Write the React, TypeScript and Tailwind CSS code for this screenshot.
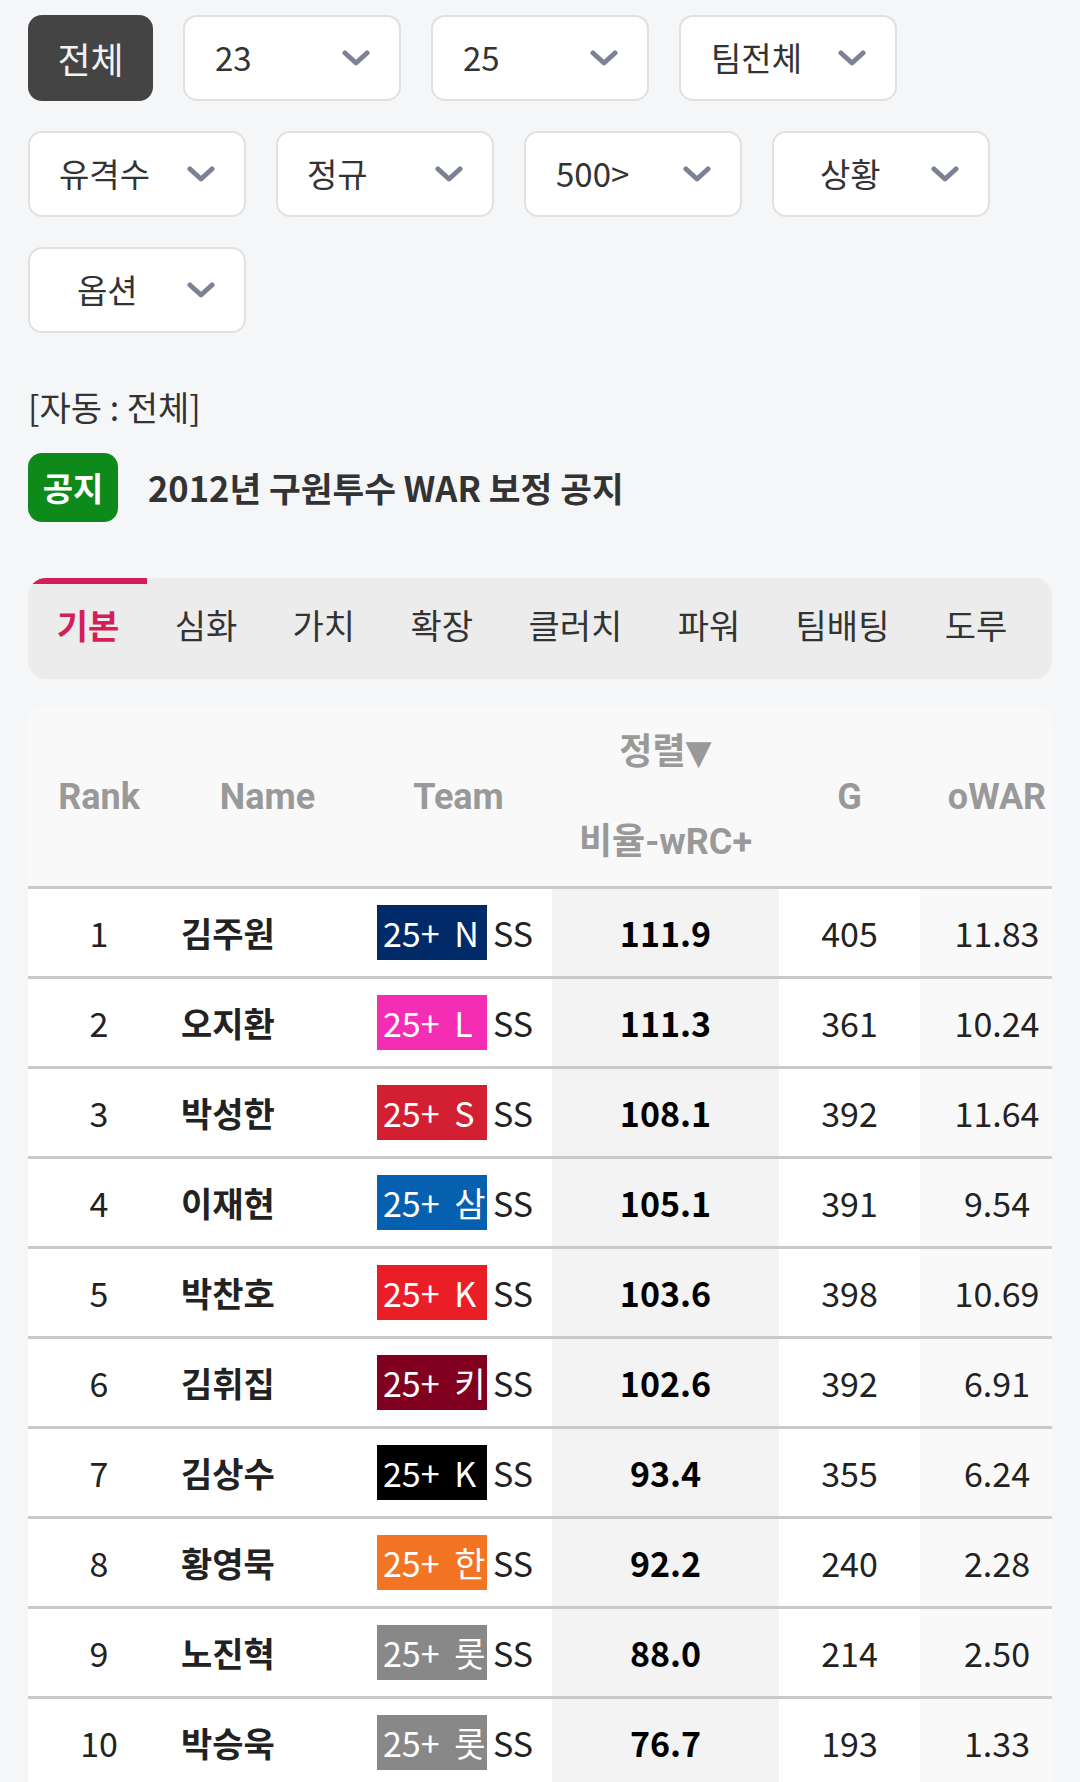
import React from 'react';

type Player = {
  rank: number;
  name: string;
  team: string;
  color: string;
  wrc: string;
  g: number;
  owar: string;
};

const players: Player[] = [
  { rank: 1, name: '김주원', team: 'N', color: 'bg-[#002a68]', wrc: '111.9', g: 405, owar: '11.83' },
  { rank: 2, name: '오지환', team: 'L', color: 'bg-[#f52cb4]', wrc: '111.3', g: 361, owar: '10.24' },
  { rank: 3, name: '박성한', team: 'S', color: 'bg-[#d21f31]', wrc: '108.1', g: 392, owar: '11.64' },
  { rank: 4, name: '이재현', team: '삼', color: 'bg-[#0660b0]', wrc: '105.1', g: 391, owar: '9.54' },
  { rank: 5, name: '박찬호', team: 'K', color: 'bg-[#ea1e26]', wrc: '103.6', g: 398, owar: '10.69' },
  { rank: 6, name: '김휘집', team: '키', color: 'bg-[#82001f]', wrc: '102.6', g: 392, owar: '6.91' },
  { rank: 7, name: '김상수', team: 'K', color: 'bg-[#000000]', wrc: '93.4', g: 355, owar: '6.24' },
  { rank: 8, name: '황영묵', team: '한', color: 'bg-[#f37423]', wrc: '92.2', g: 240, owar: '2.28' },
  { rank: 9, name: '노진혁', team: '롯', color: 'bg-[#888888]', wrc: '88.0', g: 214, owar: '2.50' },
  { rank: 10, name: '박승욱', team: '롯', color: 'bg-[#888888]', wrc: '76.7', g: 193, owar: '1.33' },
];

const Chevron = () => (
  <svg width="28" height="17" viewBox="0 0 28 17" fill="none">
    <polyline points="3,3 14,13 25,3" stroke="#7c8196" strokeWidth="5" strokeLinecap="round" strokeLinejoin="round" />
  </svg>
);

const Select = ({ label, pl }: { label: string; pl: string }) => (
  <div className="w-[218px] h-[86px] bg-white border-2 border-[#e1e1e1] rounded-[14px] flex items-center justify-between pr-[29px]">
    <span className={`${pl} text-[33px] text-[#333]`}>{label}</span>
    <Chevron />
  </div>
);

const tabs = ['기본', '심화', '가치', '확장', '클러치', '파워', '팀배팅', '도루'];

const cols = 'grid grid-cols-[142px_195px_187px_227px_141px_154px] w-[1046px]';

export default function App() {
  return (
    <div className="min-h-screen bg-[#f5f6f8] px-[28px] pt-[15px] font-['Noto_Sans_CJK_KR','Noto_Sans',sans-serif] text-[#333]">
      {/* Filters */}
      <div className="flex flex-wrap gap-[30px]">
        <div className="w-[125px] h-[86px] bg-[#444444] rounded-[14px] flex items-center justify-center text-[36px] text-[#f2f2f2]">
          전체
        </div>
        <Select label="23" pl="pl-[30px]" />
        <Select label="25" pl="pl-[30px]" />
        <Select label="팀전체" pl="pl-[30px]" />
        <Select label="유격수" pl="pl-[29px]" />
        <Select label="정규" pl="pl-[29px]" />
        <Select label="500>" pl="pl-[30px]" />
        <Select label="상황" pl="pl-[46px]" />
        <Select label="옵션" pl="pl-[47px]" />
      </div>

      <div className="mt-[51px] h-[46px] leading-[46px] text-[34px] text-[#333]">[자동 : 전체]</div>

      {/* Notice */}
      <div className="mt-[23px] flex items-center gap-[30px]">
        <div className="w-[90px] h-[69px] rounded-[14px] bg-[#0e8a1b] flex items-center justify-center text-[33px] font-bold text-white">
          공지
        </div>
        <span className="text-[34.5px] font-bold text-[#333]">2012년 구원투수 WAR 보정 공지</span>
      </div>

      {/* Tabs */}
      <div className="mt-[56px] h-[101px] w-[1024px] bg-[#ececec] rounded-[18px] overflow-hidden flex items-stretch pl-[1px] pb-[8px]">
        {tabs.map((t, i) => (
          <div
            key={t}
            className={
              i === 0
                ? 'px-[27.7px] flex items-center text-[34px] font-bold text-[#d41e5a] shadow-[inset_0_6px_0_#d41e5a]'
                : 'px-[27.7px] flex items-center text-[34px] text-[#333]'
            }
          >
            {t}
          </div>
        ))}
      </div>

      {/* Table */}
      <div className="mt-[28px] w-[1024px] rounded-t-[18px] overflow-hidden">
        <div
          className={`${cols} h-[182px] bg-[#f9f9f9] border-b-[3px] border-[#c9c9c9] font-['Roboto','Noto_Sans_CJK_KR',sans-serif] font-bold text-[36px] text-[#999]`}
        >
          <div className="flex items-center justify-center">Rank</div>
          <div className="flex items-center justify-center">Name</div>
          <div className="flex items-center justify-center">Team</div>
          <div className="flex flex-col">
            <div className="h-[90px] flex items-center justify-center">
              정렬<span className="font-['DejaVu_Sans',sans-serif] text-[34px]">▼</span>
            </div>
            <div className="h-[89px] flex items-center justify-center">비율-wRC+</div>
          </div>
          <div className="flex items-center justify-center">G</div>
          <div className="flex items-center justify-center">oWAR</div>
        </div>

        {players.map((p) => (
          <div key={p.rank} className={`${cols} h-[90px] border-b-[3px] border-[#c9c9c9] text-[34px] text-[#222]`}>
            <div className="bg-white flex items-center justify-center">{p.rank}</div>
            <div className="bg-white flex items-center pl-[11px] font-bold">{p.name}</div>
            <div className="bg-white flex items-center pl-[12px]">
              <span className={`${p.color} w-[110px] h-[55px] pl-[6px] leading-[55px] text-white whitespace-nowrap overflow-hidden`}>
                25+ <span className="ml-[7px]">{p.team}</span>
              </span>
              <span className="ml-[6px]">SS</span>
            </div>
            <div className="bg-[#f3f3f3] flex items-center justify-center font-bold text-black">{p.wrc}</div>
            <div className="bg-white flex items-center justify-center">{p.g}</div>
            <div className="bg-[#f9f9f9] flex items-center justify-center">{p.owar}</div>
          </div>
        ))}
      </div>
    </div>
  );
}
